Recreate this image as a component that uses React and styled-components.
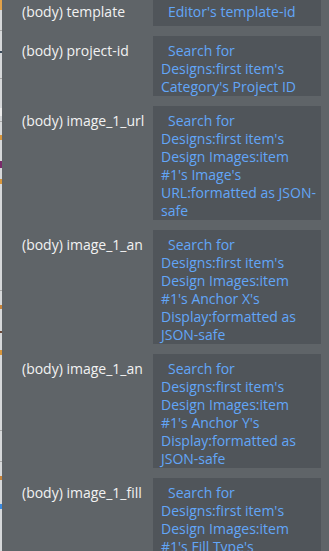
import React from 'react';
import styled, { createGlobalStyle } from 'styled-components';

// labels are already cut short by the editor, shown as they appear
const rows = [
  { key: '(body) template', value: "Editor's template-id", single: true },
  { key: '(body) project-id', value: "Search for Designs:first item's Category's Project ID" },
  { key: '(body) image_1_url', value: "Search for Designs:first item's Design Images:item #1's Image's URL:formatted as JSON-safe" },
  { key: '(body) image_1_an', value: "Search for Designs:first item's Design Images:item #1's Anchor X's Display:formatted as JSON-safe" },
  { key: '(body) image_1_an ', value: "Search for Designs:first item's Design Images:item #1's Anchor Y's Display:formatted as JSON-safe" },
  { key: '(body) image_1_fill', value: "Search for Designs:first item's Design Images:item #1's Fill Type's Display:formatted as JSON-safe" },
];

const App = () => {
  return (
    <>
      <GlobalStyle />
      <Screen>
        <EdgeStrip />
        <Panel>
          <List>
            {rows.map((row) => (
              <Row key={row.key}>
                <Label>{row.key.trim()}</Label>
                <Value single={row.single}>{row.value}</Value>
              </Row>
            ))}
          </List>
        </Panel>
      </Screen>
    </>
  );
};

const GlobalStyle = createGlobalStyle`
  html, body {
    margin: 0;
    padding: 0;
    background: #5f6468;
  }
  body {
    font-family: "Open Sans", "Liberation Sans", sans-serif;
  }
`;

const Screen = styled.div`
  display: flex;
  width: 329px;
  height: 551px;
  overflow: hidden;
`;

// sliver of the editor canvas peeking out behind the panel
const EdgeStrip = styled.div`
  flex: 0 0 2px;
  background:
    linear-gradient(
      to bottom,
      #e2a24a 0 0, #e2a24a 6px 10px, transparent 10px 51px,
      #3a4a5a 51px 53px, transparent 53px 135px,
      #d8963c 135px 140px, transparent 140px 161px,
      #7a2a6a 161px 168px, transparent 168px 179px,
      #d8963c 179px 184px, transparent 184px 305px,
      #c8843a 305px 309px, transparent 309px 331px,
      #6a4a3a 331px 333px, transparent 333px 350px,
      #d8963c 350px 355px, transparent 355px 476px,
      #c8843a 476px 480px, transparent 480px 504px,
      #3a8ae0 504px 509px, transparent 509px
    ),
    linear-gradient(
      to bottom,
      transparent 0 30px, #a8a8a8 30px 31px, transparent 31px 78px,
      #a8a8a8 78px 79px, transparent 79px 108px, #ececec 108px 116px,
      transparent 116px 121px, #a8a8a8 121px 122px, transparent 122px 290px,
      #a8a8a8 290px 291px, transparent 291px 430px, #a8a8a8 430px 431px,
      transparent 431px 461px, #a8a8a8 461px 462px, transparent 462px
    ),
    #d6d8da;
`;

const Panel = styled.div`
  flex: 1;
  background: #5f6468;
  overflow: hidden;
`;

const List = styled.div`
  display: flex;
  flex-direction: column;
  gap: 10px;
  margin-top: -3px;
  padding: 0 8px 0 20px;
`;

const Row = styled.div`
  display: grid;
  grid-template-columns: 123px 168px;
  column-gap: 8px;
  align-items: start;
`;

const Label = styled.div`
  padding-top: 6px;
  font-size: 14px;
  line-height: 18px;
  color: #f2f2f2;
  white-space: nowrap;
  overflow: hidden;
`;

const Value = styled.div`
  background: #50555a;
  padding: 6px 4px ${(p) => (p.single ? '5px' : '0')} 8px;
  font-size: 14px;
  line-height: 18px;
  color: #62a6f8;
  text-indent: 7px;
`;

export default App;
